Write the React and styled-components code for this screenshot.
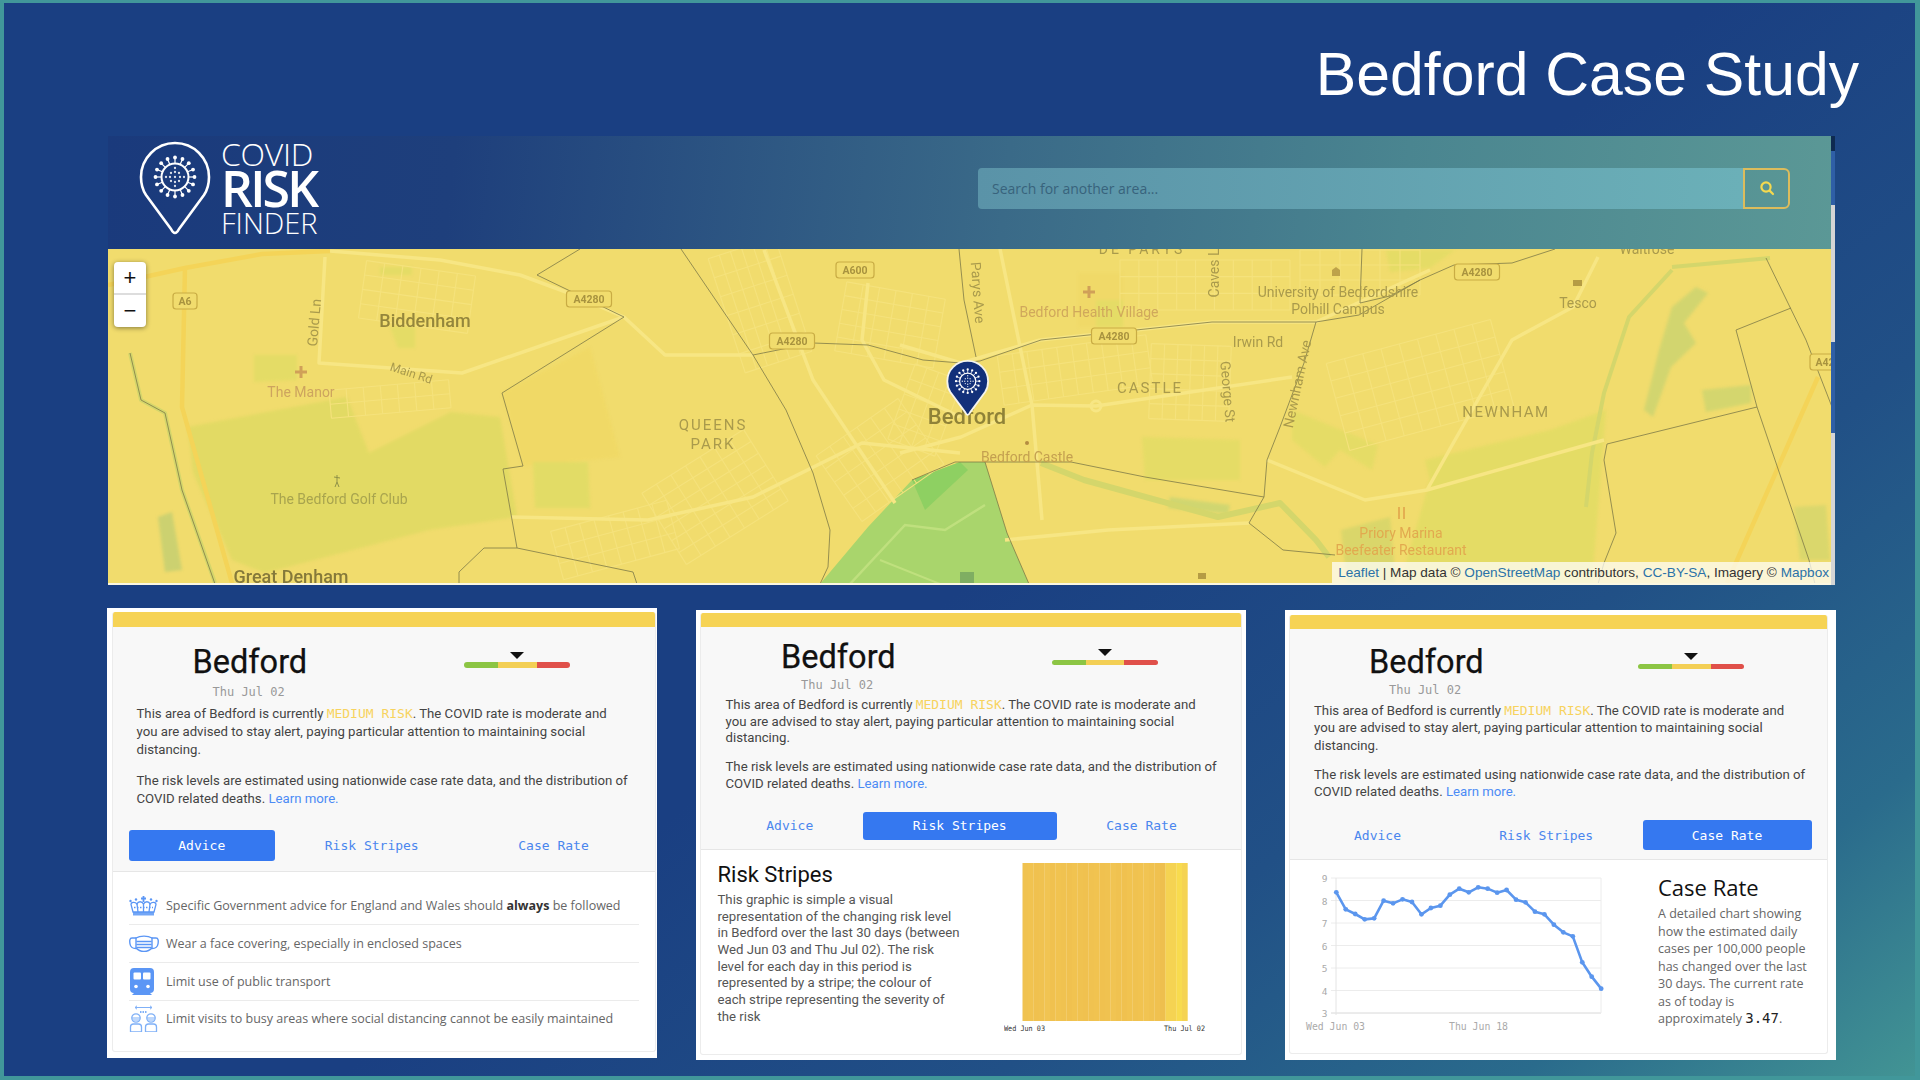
import React from "react";
import styled, { createGlobalStyle } from "styled-components";

const GlobalStyle = createGlobalStyle`
  html, body { margin: 0; padding: 0; background: #1a3f82; }
  * { box-sizing: border-box; }
`;

const Slide = styled.div`
  width: 1920px;
  height: 1080px;
  overflow: hidden;
  border-style: solid;
  border-color: #41979a;
  border-width: 3px 5px 4px 4px;
  background: linear-gradient(142deg, #1a3f82 0%, #1a3f82 52%, #215086 72%, #2a6b8c 88%, #429494 100%);
  font-family: Roboto, "Liberation Sans", sans-serif;
`;

const SlideTitle = styled.h1`
  margin: 0;
  height: 133px;
  padding: 36px 56px 0 0;
  text-align: right;
  font-family: "Liberation Sans", Arial, sans-serif;
  font-weight: 400;
  font-size: 60.7px;
  color: #fff;
`;

const MapPanel = styled.section`
  position: relative;
  width: 1725px;
  height: 449px;
  margin-left: 104px;
  display: flex;
  flex-direction: column;
`;

const EdgeSliver = styled.div`
  position: absolute;
  top: 0;
  right: -2px;
  width: 4px;
  height: 449px;
  background: linear-gradient(to bottom, #0e2a50 0 15px, #2f5fa6 15px 69px, #d5d5d5 69px 206px, #2f5fa6 206px 297px, #d5d5d5 297px);
`;

const TopBar = styled.header`
  height: 113px;
  flex: none;
  display: flex;
  align-items: center;
  padding: 0 43px 9px 30px;
  background: linear-gradient(96deg, #1a3a7c 0%, #1e3f7c 20%, #3a6a88 52%, #4a8590 75%, #5b9896 100%);
`;

const Logo = styled.div`
  display: flex;
  align-items: center;
  gap: 9px;
`;

const LogoWords = styled.div`
  display: flex;
  flex-direction: column;
  margin-top: -2px;
  font-family: "Open Sans", sans-serif;
  color: #fff;
`;

const LogoWord = styled.span`
  display: block;
  white-space: nowrap;
  font-size: ${(p) => p.$size}px;
  font-weight: ${(p) => p.$weight};
  line-height: ${(p) => p.$line}px;
  letter-spacing: ${(p) => p.$track}px;
`;

const Search = styled.div`
  margin-left: auto;
  display: flex;
  height: 41px;
`;

const SearchInput = styled.div`
  width: 765px;
  height: 41px;
  padding-left: 14px;
  display: flex;
  align-items: center;
  border-radius: 4px 0 0 4px;
  background: linear-gradient(90deg, #5a93a8, #6bb0b8);
  font-family: "Open Sans", sans-serif;
  font-size: 14px;
  color: #38637c;
`;

const SearchButton = styled.div`
  width: 47px;
  height: 41px;
  display: flex;
  align-items: center;
  justify-content: center;
  border: 2px solid #dcbc5c;
  border-radius: 0 6px 6px 0;
`;

const MapArea = styled.div`
  position: relative;
  flex: 1;
  overflow: hidden;
  background: #f1dc6d;
  border-bottom: 2px solid #fbf7e2;
`;

const MapSvg = styled.svg`
  display: block;
  filter: blur(0.45px);
`;

const SoftZones = styled.g`
  filter: blur(1.5px);
`;

const ZoomControl = styled.div`
  position: absolute;
  top: 13px;
  left: 6px;
  width: 32px;
  height: 65px;
  background: #fff;
  border-radius: 4px;
  box-shadow: 0 1px 5px rgba(0, 0, 0, 0.45);
`;

const ZoomButton = styled.div`
  height: ${(p) => p.$h}px;
  display: flex;
  align-items: center;
  justify-content: center;
  font-family: "Liberation Sans", sans-serif;
  font-size: 22px;
  color: #111;
  & + & { border-top: 2px solid #ddd; }
`;

const Attribution = styled.div`
  position: absolute;
  right: 0;
  bottom: 0;
  height: 21px;
  padding: 0 4px 0 6px;
  display: flex;
  align-items: center;
  white-space: pre;
  background: rgba(255, 255, 255, 0.72);
  font-family: "Liberation Sans", Arial, sans-serif;
  font-size: 13.6px;
  color: #333;
`;

const AttrLink = styled.span`
  color: #2b72a8;
`;

const CardRow = styled.div`
  display: flex;
  align-items: flex-start;
  gap: 39px;
  margin-left: 103px;
`;

const Frame = styled.article`
  width: ${(p) => p.$m.width}px;
  height: ${(p) => p.$m.height}px;
  margin-top: ${(p) => p.$m.top}px;
  padding: ${(p) => p.$m.frame};
  background: #fff;
`;

const Inner = styled.div`
  height: 100%;
  display: flex;
  flex-direction: column;
  background: #fff;
  border-radius: 3px;
  border: 1px solid #ececec;
  border-top: 0;
  overflow: hidden;
`;

const RiskBand = styled.div`
  height: ${(p) => p.$m.band}px;
  flex: none;
  background: #f6d355;
`;

const Summary = styled.div`
  flex: none;
  background: #f8f8f8;
  border-bottom: 1px solid #e6e6e6;
  padding-bottom: ${(p) => p.$m.tabsBottom}px;
`;

const HeadRow = styled.div`
  display: flex;
  align-items: flex-start;
`;

const TitleBlock = styled.div`
  flex: 0 0 ${(p) => p.$m.meterLeft}px;
  padding: ${(p) => p.$m.titleTop}px 0 0 ${(p) => p.$m.titleLeft}px;
`;

const PlaceName = styled.h2`
  margin: 0;
  font-family: Roboto, sans-serif;
  font-weight: 400;
  font-size: 32.5px;
  line-height: 36px;
  color: #111;
  -webkit-text-stroke: 0.25px #111;
`;

const DateText = styled.div`
  margin: ${(p) => p.$m.dateGap}px 0 0 20px;
  height: 16px;
  font-family: "DejaVu Sans Mono", monospace;
  font-size: 12px;
  line-height: 16px;
  color: #999;
`;

const Meter = styled.div`
  width: 106px;
  margin-top: ${(p) => p.$m.meterTop}px;
  display: flex;
  flex-direction: column;
  align-items: center;
`;

const MeterArrow = styled.div`
  width: 0;
  height: 0;
  border-left: 7.5px solid transparent;
  border-right: 7.5px solid transparent;
  border-top: 7px solid #111;
`;

const MeterBar = styled.div`
  width: 100%;
  height: 5.5px;
  margin-top: 3.5px;
  display: flex;
  border-radius: 3px;
  overflow: hidden;
`;

const MeterPart = styled.div`
  flex: ${(p) => p.$grow};
  background: ${(p) => p.$color};
`;

const Copy = styled.div`
  width: ${(p) => p.$m.copyLeft + 494}px;
  margin-top: ${(p) => p.$m.copyTop}px;
  padding-left: ${(p) => p.$m.copyLeft}px;
  font-size: 13.2px;
  line-height: ${(p) => p.$m.line}px;
  color: #444;
`;

const CopyPara = styled.p`
  margin: 0;
  & + & { margin-top: ${(p) => p.$m.paraGap}px; }
`;

const RiskWord = styled.span`
  font-family: "DejaVu Sans Mono", monospace;
  font-size: 13px;
  color: #f7d35e;
`;

const LearnMore = styled.span`
  color: #4c8bf5;
`;

const Tabs = styled.nav`
  display: flex;
  margin: ${(p) => p.$m.tabsTop}px 0 0 ${(p) => p.$m.tabsLeft}px;
`;

const Tab = styled.div`
  width: ${(p) => p.$w}px;
  height: ${(p) => p.$m.tabH}px;
  display: flex;
  align-items: center;
  justify-content: center;
  border-radius: 3px;
  font-family: "DejaVu Sans Mono", monospace;
  font-size: 13px;
  color: ${(p) => (p.$active ? "#fff" : "#4a86ee")};
  background: ${(p) => (p.$active ? "#3578f0" : "transparent")};
`;

const AdviceList = styled.ul`
  list-style: none;
  margin: 0;
  padding: 16px 16px 0;
`;

const AdviceRow = styled.li`
  height: 37.7px;
  display: flex;
  align-items: center;
  border-bottom: 1px solid ${(p) => (p.$last ? "transparent" : "#ebebeb")};
  font-family: "Open Sans", sans-serif;
  font-size: 12.5px;
  color: #666;
  white-space: nowrap;
`;

const AdviceIcon = styled.div`
  flex: 0 0 37.5px;
  display: flex;
  align-items: center;
`;

const Strong = styled.b`
  color: #333;
`;

const StripesBody = styled.div`
  flex: 1;
  display: flex;
  align-items: flex-start;
`;

const StripesText = styled.div`
  flex: 0 0 303px;
  padding: 11px 0 0 16.5px;
`;

const SectionTitle = styled.h3`
  margin: 0;
  font-family: Roboto, sans-serif;
  font-weight: 400;
  font-size: 22px;
  line-height: 28px;
  color: #111;
`;

const StripesCopy = styled.p`
  margin: 3px 0 0;
  width: 245px;
  font-size: 13.2px;
  line-height: 16.67px;
  color: #555;
`;

const StripesFigure = styled.svg`
  display: block;
  margin-top: 13px;
`;

const RateBody = styled.div`
  flex: 1;
  display: flex;
  align-items: flex-start;
`;

const RateFigure = styled.svg`
  display: block;
  flex: none;
  margin: 5px 0 0 9.5px;
`;

const RateText = styled.div`
  margin-left: 54px;
  padding-top: 11.5px;
  font-family: "Open Sans", sans-serif;
`;

const RateTitle = styled.h3`
  margin: 0;
  font-weight: 400;
  font-size: 22px;
  line-height: 30px;
  color: #111;
`;

const RateCopy = styled.p`
  margin: 3.5px 0 0;
  width: 160px;
  font-size: 12.5px;
  line-height: 17.4px;
  color: #666;
`;

const RateValue = styled.span`
  font-family: "DejaVu Sans Mono", monospace;
  font-size: 14px;
  color: #222;
`;

const MapLabel = styled.text`
  font-family: Roboto, sans-serif;
  font-size: ${(p) => p.$size || 14}px;
  font-weight: ${(p) => p.$weight || 400};
  fill: ${(p) => p.$color || "#a99a4c"};
  letter-spacing: ${(p) => p.$track || 0}px;
  text-anchor: middle;
`;

const ShieldText = styled.text`
  font-family: Roboto, sans-serif;
  font-size: 10.5px;
  font-weight: 700;
  fill: #a8933f;
  text-anchor: middle;
`;

const VIRUS_SPIKES = Array.from({ length: 16 }, (_, i) => (i * Math.PI * 2) / 16);
const VIRUS_DOTS = [[0, 0], [-5, 0], [5, 0], [0, -5], [0, 5], [-4, -4], [4, -4], [-4, 4], [4, 4], [-9, 0], [9, 0], [0, -9], [0, 9]];

const Virus = ({ cx, cy, scale = 1 }) => (
  <g transform={`translate(${cx} ${cy}) scale(${scale})`} fill="#fff" stroke="#fff">
    <circle r="13.5" fill="none" strokeWidth="2" />
    {VIRUS_SPIKES.map((a) => (
      <g key={a}>
        <line x1={Math.cos(a) * 13} y1={Math.sin(a) * 13} x2={Math.cos(a) * 19} y2={Math.sin(a) * 19} strokeWidth="1.2" />
        <circle cx={Math.cos(a) * 19.5} cy={Math.sin(a) * 19.5} r="1.9" stroke="none" />
      </g>
    ))}
    {VIRUS_DOTS.map(([x, y]) => (
      <circle key={`${x}${y}`} cx={x} cy={y} r="1.15" stroke="none" opacity="0.85" />
    ))}
  </g>
);

const PIN_PATH = "M37 93 Q35 93 33 89 L8 55 C4 49 3 42 3 37 A34 34 0 0 1 71 37 C71 42 70 49 66 55 L41 89 Q39 93 37 93 Z";

const LogoPin = () => (
  <svg width="74" height="96" viewBox="0 0 74 96">
    <path d={PIN_PATH} fill="none" stroke="#fff" strokeWidth="2.6" strokeLinejoin="round" />
    <Virus cx={37} cy={37} />
  </svg>
);

const SearchIcon = () => (
  <svg width="16" height="16" viewBox="0 0 16 16" fill="none" stroke="#f5d94f" strokeLinecap="round">
    <circle cx="7" cy="7" r="4.6" strokeWidth="2.2" />
    <line x1="10.6" y1="10.6" x2="14" y2="14" strokeWidth="2.2" />
  </svg>
);

const CrownIcon = () => (
  <svg width="29" height="20" viewBox="0 0 29 20" fill="none" stroke="#5b96f5" strokeWidth="1.3">
    <path d="M14.5 0v6M12 2.5h5" strokeWidth="1.8" />
    <path d="M4 16 2 8.5C2 6 6 5.5 8 8c1-3 5-3 6.5 0C16 5 20 5 21 8c2-2.5 6-2 6 .5L25 16Z" />
    <path d="M8 8l1 8M14.5 8v8M21 8l-1 8" />
    <path d="M4 16h21v3.5H4Z" fill="#5b96f5" stroke="none" opacity="0.85" />
    <circle cx="1.5" cy="5" r="1.2" fill="#5b96f5" stroke="none" />
    <circle cx="7" cy="3.5" r="1.2" fill="#5b96f5" stroke="none" />
    <circle cx="22" cy="3.5" r="1.2" fill="#5b96f5" stroke="none" />
    <circle cx="27.5" cy="5" r="1.2" fill="#5b96f5" stroke="none" />
    <path d="M5 11.5h19" strokeDasharray="1.5 1.5" />
  </svg>
);

const MaskIcon = () => (
  <svg width="30" height="18" viewBox="0 0 30 18" fill="none" stroke="#5b96f5" strokeWidth="1.4" strokeLinecap="round">
    <path d="M7 3C11 .5 19 .5 23 3V13C19 17.5 11 17.5 7 13Z" />
    <path d="M7 3H3C.5 3 .5 6 1 9c.5 3 2 4.5 6 4.5M23 3h4c2.5 0 2.5 3 2 6-.5 3-2 4.5-6 4.5" />
    <path d="M8 6.5h14M8 9.5h14M8 12.5h14" />
  </svg>
);

const TrainIcon = () => (
  <svg width="26" height="27" viewBox="0 0 26 27">
    <path d="M5 0h16a4 4 0 0 1 4 4v17a4 4 0 0 1-4 4l2 2H3l2-2a4 4 0 0 1-4-4V4a4 4 0 0 1 4-4Z" fill="#5b96f5" />
    <rect x="4.5" y="4.5" width="7.5" height="7" rx="1" fill="#fff" />
    <rect x="14" y="4.5" width="7.5" height="7" rx="1" fill="#fff" />
    <circle cx="7" cy="18.5" r="1.8" fill="#fff" />
    <circle cx="19" cy="18.5" r="1.8" fill="#fff" />
  </svg>
);

const Person = ({ x }) => (
  <g transform={`translate(${x} 0)`}>
    <circle cx="6.5" cy="13" r="4.2" />
    <path d="M2.5 13h8M3 15h7" strokeWidth="1" />
    <path d="M1 27v-5c0-2 1.5-3 3-3h5c1.5 0 3 1 3 3v5Z" />
  </g>
);

const DistanceIcon = () => (
  <svg width="29" height="27" viewBox="0 0 29 27" fill="none" stroke="#7fb0f7" strokeWidth="1.3">
    <path d="M6 2.5h17M8 .8 6 2.5l2 1.7M21 .8l2 1.7-2 1.7" strokeWidth="1" />
    <path d="M11 7h7" strokeWidth="2" strokeDasharray="1.5 1" />
    <Person x={0.5} />
    <Person x={15.5} />
  </svg>
);

const ZONES = [
  ["188,427 347,397 369,453 451,412 500,417 517,517 429,530 265,573 232,560 193,473", "#e2da64"],
  ["254,355 297,355 297,380 254,382", "#e4dc66"],
  ["380,267 412,267 412,275 380,275", "#e4dc66"],
  ["390,327 415,327 415,348 398,348", "#e4dc66"],
  ["502,393 590,347 620,457 523,466", "#f0d966"],
  ["533,462 588,462 590,508 535,508", "#e2dc66"],
  ["1078,273 1123,273 1123,327 1078,327", "#f0d968"],
  ["1096,300 1123,300 1123,327 1096,327", "#e5dc66"],
  ["1142,437 1240,440 1240,480 1145,480", "#e5dc66"],
  ["1292,410 1378,445 1372,470 1340,450 1325,467 1292,440", "#e5dc66"],
  ["1606,410 1592,583 1400,583 1430,480 1425,460 1550,430", "#e4dc65"],
  ["1696,287 1708,293 1684,323 1696,343 1671,367 1653,417 1644,410 1659,350 1672,307", "#d2d56f"],
  ["1702,390 1751,385 1751,403 1706,412", "#d4d66e"],
  ["1341,530 1390,517 1396,583 1347,583", "#dad66a"],
  ["158,517 172,512 182,570 165,572", "#ccd170"],
  ["1794,507 1826,505 1830,560 1800,560", "#dad76c"],
  ["1170,497 1230,505 1228,514 1168,508", "#d0d670"],
  ["1386,250 1455,250 1430,268 1390,272", "#e5dc66"],
];

const YELLOW_ROADS = [
  "108,285 185,268 262,254 330,251",
  "185,267 182,407 232,583",
  "1818,377 1727,583",
];

const LIGHT_ROADS = [
  "330,251 440,260 520,275 566,292 624,317 665,355 753,355",
  "900,453 961,437 1032,405 1096,406 1292,377",
  "1267,460 1365,500 1427,490 1604,440",
  "1005,540 1108,530 1249,523",
  "1427,490 1451,447 1512,340 1573,307 1598,257",
  "960,453 862,443 753,497 648,520 511,517",
  "764,250 813,380 895,503",
  "868,283 862,340 884,380 960,417",
  "325,257 319,363 462,373 621,318",
  "900,345 961,363 1040,340",
  "1040,340 1212,322 1316,322 1430,270",
  "1000,249 1032,405 1042,520",
];

const RIVERS = [
  ["1041,463 1084,480 1218,517 1280,503 1316,540 1329,557", 6],
  ["1672,270 1629,317 1604,393 1592,453 1586,507", 4],
  ["1672,267 1770,258", 4],
  ["130,353 141,400 165,413 182,490 215,583", 4],
];

const BOUNDARIES = [
  "580,249 537,275 624,317 502,393 523,466 503,469 517,548 633,572 637,584",
  "517,548 484,548 459,572 459,584",
  "681,249 753,355 786,410 813,473 830,530 828,567 820,584",
  "753,355 813,343 868,345 923,360 961,363 980,361 1041,340 1212,322 1316,322 1359,315 1420,280 1454,265 1512,263 1555,249",
  "959,249 964,300 976,357",
  "1362,249 1360,303 1390,296 1420,280",
  "1316,322 1304,363 1280,427 1267,460 1264,497 1249,523 1283,550 1335,555",
  "955,462 1071,462 1145,477 1264,497",
  "912,480 955,462",
  "985,462 1007,533 1029,584",
  "1766,258 1806,340 1832,407",
  "1791,308 1736,330 1757,407 1809,560 1815,584",
  "1757,407 1607,444 1604,460 1616,533 1604,563 1598,584",
  "130,353 141,400 165,413 182,490 215,584",
];

const GRIDS = [
  [362, 268, 110, 58, 6, 4, 8],
  [330, 385, 120, 28, 7, 2, -5],
  [655, 455, 120, 84, 7, 6, -32],
  [700, 270, 120, 70, 6, 6, 72],
  [840, 290, 100, 70, 6, 5, 10],
  [830, 420, 100, 80, 6, 5, -35],
  [1000, 345, 150, 50, 10, 3, -8],
  [1150, 345, 80, 75, 6, 5, 2],
  [1120, 260, 170, 50, 9, 3, 0],
  [1335, 340, 170, 90, 9, 5, -15],
  [1300, 250, 120, 45, 6, 3, 0],
  [555, 515, 120, 50, 8, 3, -15],
  [900, 370, 50, 80, 4, 5, 20],
];

const Grid = ({ x, y, w, h, cols, rows, rot }) => {
  const vert = Array.from({ length: cols + 1 }, (_, i) => x + (i * w) / cols);
  const horiz = Array.from({ length: rows + 1 }, (_, i) => y + (i * h) / rows);
  return (
    <g transform={`rotate(${rot} ${x + w / 2} ${y + h / 2})`} stroke="#f5e27c" strokeWidth="1.1">
      {vert.map((vx) => <line key={`v${vx}`} x1={vx} y1={y} x2={vx} y2={y + h} />)}
      {horiz.map((hy) => <line key={`h${hy}`} x1={x} y1={hy} x2={x + w} y2={hy} />)}
    </g>
  );
};

const Shield = ({ x, y, label, w }) => (
  <g>
    <rect x={x - w / 2} y={y - 8} width={w} height={16} rx="3" fill="#f1dc6d" stroke="#c9ac44" strokeWidth="1.2" />
    <ShieldText x={x} y={y + 4}>{label}</ShieldText>
  </g>
);

const MapDrawing = () => (
  <MapSvg width="1725" height="334" viewBox="108 249 1725 334">
    <rect x="108" y="249" width="1725" height="334" fill="#f1dc6d" />
    <SoftZones>
      {ZONES.map(([points, color]) => <polygon key={points} points={points} fill={color} />)}
    </SoftZones>
    <polygon points="820,584 868,527 912,480 960,462 985,462 1007,533 1029,584" fill="#a9d56c" />
    <polygon points="912,480 960,462 968,470 925,510" fill="#8ed062" />
    {RIVERS.map(([points, width]) => (
      <polyline key={points} points={points} fill="none" stroke="#d4d66b" strokeWidth={width} strokeLinejoin="round" />
    ))}
    {GRIDS.map(([x, y, w, h, cols, rows, rot]) => (
      <Grid key={`${x}-${y}`} x={x} y={y} w={w} h={h} cols={cols} rows={rows} rot={rot} />
    ))}
    {LIGHT_ROADS.map((points) => (
      <polyline key={points} points={points} fill="none" stroke="#f7e684" strokeWidth="3.5" strokeLinejoin="round" />
    ))}
    <polyline points="850,584 905,525 945,530 985,505" fill="none" stroke="#bfe07e" strokeWidth="2.5" />
    <polyline points="880,560 940,584" fill="none" stroke="#bfe07e" strokeWidth="2" />
    {YELLOW_ROADS.map((points) => (
      <polyline key={points} points={points} fill="none" stroke="#f4d458" strokeWidth="4.5" strokeLinejoin="round" />
    ))}
    <circle cx="1096" cy="406" r="5" fill="none" stroke="#f7e684" strokeWidth="3" />
    {BOUNDARIES.map((points) => (
      <polyline key={points} points={points} fill="none" stroke="#7d7a48" strokeWidth="0.8" strokeLinejoin="round" />
    ))}
    <Shield x={185} y={301} label="A6" w={24} />
    <Shield x={589} y={299} label="A4280" w={45} />
    <Shield x={855} y={270} label="A600" w={38} />
    <Shield x={792} y={341} label="A4280" w={45} />
    <Shield x={1114} y={336} label="A4280" w={45} />
    <Shield x={1477} y={272} label="A4280" w={45} />
    <Shield x={1825} y={362} label="A42" w={30} />

    <MapLabel x={425} y={327} $size={18} $weight={500} $color="#94863c">Biddenham</MapLabel>
    <MapLabel x={0} y={0} transform="translate(319 323) rotate(-85)">Gold Ln</MapLabel>
    <MapLabel x={0} y={0} $size={12} transform="translate(410 377) rotate(18)">Main Rd</MapLabel>
    <MapLabel x={301} y={397} $color="#cda45f">The Manor</MapLabel>
    <path d="M301 366v12M295 372h12" stroke="#d0a058" strokeWidth="3" />
    <MapLabel x={339} y={504} $color="#a8a44e">The Bedford Golf Club</MapLabel>
    <path d="M337 475v7l-2 5M337 482l2 5M334 477l6 1" stroke="#8f9148" strokeWidth="1" fill="none" />
    <MapLabel x={291} y={583} $size={18} $weight={500} $color="#85793a">Great Denham</MapLabel>
    <MapLabel x={713} y={430} $size={15} $track={2}>QUEENS</MapLabel>
    <MapLabel x={713} y={449} $size={15} $track={2}>PARK</MapLabel>
    <MapLabel x={0} y={0} transform="translate(973 293) rotate(86)">Parys Ave</MapLabel>
    <MapLabel x={1142} y={254} $track={3}>DE PARYS</MapLabel>
    <MapLabel x={0} y={0} transform="translate(1219 273) rotate(-90)">Caves L</MapLabel>
    <MapLabel x={1338} y={297}>University of Bedfordshire</MapLabel>
    <MapLabel x={1338} y={314}>Polhill Campus</MapLabel>
    <MapLabel x={1089} y={317} $color="#d0a85c">Bedford Health Village</MapLabel>
    <path d="M1089 286v12M1083 292h12" stroke="#d0a058" strokeWidth="3" />
    <path d="M1336 267l-4 3v6h8v-6Z" fill="#bda24a" />
    <MapLabel x={1258} y={347}>Irwin Rd</MapLabel>
    <MapLabel x={1150} y={393} $size={15} $track={2}>CASTLE</MapLabel>
    <MapLabel x={0} y={0} transform="translate(1223 392) rotate(85)">George St</MapLabel>
    <MapLabel x={0} y={0} transform="translate(1302 385) rotate(-78)">Newnham Ave</MapLabel>
    <MapLabel x={1506} y={417} $size={15} $track={1.5}>NEWNHAM</MapLabel>
    <MapLabel x={1578} y={308}>Tesco</MapLabel>
    <rect x="1573" y="280" width="9" height="6" fill="#b59c44" />
    <MapLabel x={1647} y={254}>Waitrose</MapLabel>
    <MapLabel x={967} y={424} $size={22} $weight={500} $color="#8f8238">Bedford</MapLabel>
    <MapLabel x={1027} y={462} $color="#c4a050">Bedford Castle</MapLabel>
    <circle cx="1027" cy="443" r="2" fill="#b48c40" />
    <MapLabel x={1401} y={538} $color="#e2a94f">Priory Marina</MapLabel>
    <MapLabel x={1401} y={555} $color="#e2a94f">Beefeater Restaurant</MapLabel>
    <path d="M1399 507v12M1404 507v12" stroke="#e0a048" strokeWidth="1.5" />
    <rect x="1198" y="573" width="8" height="6" fill="#b59c44" />
    <rect x="960" y="572" width="14" height="11" fill="#7fae62" />

    <g transform="translate(945.5 359) scale(0.6)">
      <path d={PIN_PATH} fill="#12307a" stroke="#f4f4ee" strokeWidth="3" strokeLinejoin="round" />
      <Virus cx={37} cy={37} />
    </g>
  </MapSvg>
);

const STRIPE_SHADES = [
  "#f0c250", "#f1c350", "#f0c14f", "#f0c250", "#f1c452", "#f0c14f", "#f1c350", "#f0c250", "#f0c14f", "#f1c350",
  "#f0c250", "#f0c14f", "#f0c250", "#f1c350", "#f0c14f", "#f0c250", "#f1c452", "#f0c250", "#f0c14f", "#f1c350",
  "#f0c250", "#f1c350", "#f1c452", "#f0c250", "#f0c14f", "#eebf4e", "#f5d352", "#f5d352", "#f8db4e", "#f5d352",
];

const StripesChart = () => (
  <StripesFigure width="202" height="178" viewBox="0 0 202 178">
    {STRIPE_SHADES.map((color, i) => (
      <rect key={i} x={18.5 + i * 5.5} y="0" width="5.7" height="158" fill={color} />
    ))}
    <text x="0" y="168" fontFamily="DejaVu Sans Mono, monospace" fontSize="7.5" fill="#333" textLength="41" lengthAdjust="spacingAndGlyphs">Wed Jun 03</text>
    <text x="160" y="168" fontFamily="DejaVu Sans Mono, monospace" fontSize="7.5" fill="#333" textLength="41" lengthAdjust="spacingAndGlyphs">Thu Jul 02</text>
  </StripesFigure>
);

const RATE_Y = [877, 928, 942, 958, 955, 902, 910, 898, 906, 943, 924, 917, 884, 866, 877, 862, 866, 878, 870, 899, 907, 935, 943, 974, 997, 1009, 1087, 1130, 1166];
const RATE_POINTS = RATE_Y.map((v, i) => [1337.3 + i * 9.46, 600 + v / 3]);
const RATE_TICKS = [9, 8, 7, 6, 5, 4, 3];

const RateChart = () => (
  <RateFigure width="305" height="170" viewBox="1300 865 305 170">
    {RATE_TICKS.map((tick, i) => (
      <g key={tick}>
        <line x1="1332" y1={878 + i * 22.5} x2="1602" y2={878 + i * 22.5} stroke={tick === 3 ? "#d8d8d8" : "#ececec"} />
        <text x="1325.5" y={882 + i * 22.5} fontFamily="DejaVu Sans Mono, monospace" fontSize="9.5" fill="#aaa" textAnchor="middle">{tick}</text>
      </g>
    ))}
    <line x1="1337" y1="878" x2="1337" y2="1015" stroke="#e4e4e4" />
    <line x1="1602" y1="878" x2="1602" y2="1013" stroke="#ececec" />
    <text x="1307" y="1030" fontFamily="DejaVu Sans Mono, monospace" fontSize="9.8" fill="#aaa">Wed Jun 03</text>
    <text x="1450" y="1030" fontFamily="DejaVu Sans Mono, monospace" fontSize="9.8" fill="#aaa">Thu Jun 18</text>
    <polyline points={RATE_POINTS.map((p) => p.join(",")).join(" ")} fill="none" stroke="#5b96ee" strokeWidth="2.6" strokeLinejoin="round" />
    {RATE_POINTS.map(([x, y]) => <circle key={x} cx={x} cy={y} r="2.4" fill="#5b96ee" />)}
  </RateFigure>
);

const METRICS = {
  advice: {
    width: 550, height: 450, top: 23, frame: "3.5px 1px 6px 4.5px", band: 15,
    titleTop: 17, titleLeft: 80, dateGap: 4, meterLeft: 351.5, meterTop: 25,
    copyTop: 5, copyLeft: 24, line: 18.4, paraGap: 12.6,
    tabsTop: 21, tabsLeft: 16, tabH: 31, tabsBottom: 10, tabWidths: [146.5, 193.5, 170],
  },
  stripes: {
    width: 550, height: 450, top: 25, frame: "3px 4px 5px 4px", band: 14,
    titleTop: 12, titleLeft: 80, dateGap: 2, meterLeft: 350.5, meterTop: 22,
    copyTop: 4, copyLeft: 24.5, line: 16.7, paraGap: 9.4,
    tabsTop: 19, tabsLeft: 15.5, tabH: 28.5, tabsBottom: 9, tabWidths: [146.5, 193.5, 170],
  },
  rate: {
    width: 551, height: 450, top: 25, frame: "4.5px 8.5px 6px 3.5px", band: 14.5,
    titleTop: 14.5, titleLeft: 79.5, dateGap: 2.5, meterLeft: 348.5, meterTop: 24,
    copyTop: 4, copyLeft: 24.5, line: 17.3, paraGap: 12,
    tabsTop: 20, tabsLeft: 15.5, tabH: 29.5, tabsBottom: 9.5, tabWidths: [145, 192.5, 169],
  },
};

const TAB_ITEMS = [
  ["advice", "Advice"],
  ["stripes", "Risk Stripes"],
  ["rate", "Case Rate"],
];

const RiskCard = ({ active, children }) => {
  const m = METRICS[active];
  return (
    <Frame $m={m}>
      <Inner>
        <RiskBand $m={m} />
        <Summary $m={m}>
          <HeadRow>
            <TitleBlock $m={m}>
              <PlaceName>Bedford</PlaceName>
              <DateText $m={m}>Thu Jul 02</DateText>
            </TitleBlock>
            <Meter $m={m}>
              <MeterArrow />
              <MeterBar>
                <MeterPart $grow={34} $color="#8cc544" />
                <MeterPart $grow={38.5} $color="#f3cf55" />
                <MeterPart $grow={33.5} $color="#e0504a" />
              </MeterBar>
            </Meter>
          </HeadRow>
          <Copy $m={m}>
            <CopyPara $m={m}>
              This area of Bedford is currently <RiskWord>MEDIUM RISK</RiskWord>. The COVID rate is moderate and you are advised to stay alert, paying particular attention to maintaining social distancing.
            </CopyPara>
            <CopyPara $m={m}>
              The risk levels are estimated using nationwide case rate data, and the distribution of COVID related deaths. <LearnMore>Learn more.</LearnMore>
            </CopyPara>
          </Copy>
          <Tabs $m={m}>
            {TAB_ITEMS.map(([key, label], i) => (
              <Tab key={key} $m={m} $w={m.tabWidths[i]} $active={key === active}>{label}</Tab>
            ))}
          </Tabs>
        </Summary>
        {children}
      </Inner>
    </Frame>
  );
};

const App = () => (
  <>
    <GlobalStyle />
    <Slide>
      <SlideTitle>Bedford Case Study</SlideTitle>
      <MapPanel>
        <TopBar>
          <Logo>
            <LogoPin />
            <LogoWords>
              <LogoWord $size={32} $weight={300} $line={27} $track={-0.3}>COVID</LogoWord>
              <LogoWord $size={50} $weight={600} $line={43} $track={-2.8}>RISK</LogoWord>
              <LogoWord $size={29} $weight={300} $line={25} $track={0}>FINDER</LogoWord>
            </LogoWords>
          </Logo>
          <Search>
            <SearchInput>Search for another area...</SearchInput>
            <SearchButton><SearchIcon /></SearchButton>
          </Search>
        </TopBar>
        <MapArea>
          <MapDrawing />
          <ZoomControl>
            <ZoomButton $h={31}>+</ZoomButton>
            <ZoomButton $h={34}>−</ZoomButton>
          </ZoomControl>
          <Attribution>
            <AttrLink>Leaflet</AttrLink> | Map data © <AttrLink>OpenStreetMap</AttrLink> contributors, <AttrLink>CC-BY-SA</AttrLink>, Imagery © <AttrLink>Mapbox</AttrLink>
          </Attribution>
        </MapArea>
        <EdgeSliver />
      </MapPanel>
      <CardRow>
        <RiskCard active="advice">
          <AdviceList>
            <AdviceRow>
              <AdviceIcon><CrownIcon /></AdviceIcon>
              <span>Specific Government advice for England and Wales should <Strong>always</Strong> be followed</span>
            </AdviceRow>
            <AdviceRow>
              <AdviceIcon><MaskIcon /></AdviceIcon>
              <span>Wear a face covering, especially in enclosed spaces</span>
            </AdviceRow>
            <AdviceRow>
              <AdviceIcon><TrainIcon /></AdviceIcon>
              <span>Limit use of public transport</span>
            </AdviceRow>
            <AdviceRow $last>
              <AdviceIcon><DistanceIcon /></AdviceIcon>
              <span>Limit visits to busy areas where social distancing cannot be easily maintained</span>
            </AdviceRow>
          </AdviceList>
        </RiskCard>
        <RiskCard active="stripes">
          <StripesBody>
            <StripesText>
              <SectionTitle>Risk Stripes</SectionTitle>
              <StripesCopy>
                This graphic is simple a visual representation of the changing risk level in Bedford over the last 30 days (between Wed Jun 03 and Thu Jul 02). The risk level for each day in this period is represented by a stripe; the colour of each stripe representing the severity of the risk
              </StripesCopy>
            </StripesText>
            <StripesChart />
          </StripesBody>
        </RiskCard>
        <RiskCard active="rate">
          <RateBody>
            <RateChart />
            <RateText>
              <RateTitle>Case Rate</RateTitle>
              <RateCopy>
                A detailed chart showing how the estimated daily cases per 100,000 people has changed over the last 30 days. The current rate as of today is approximately <RateValue>3.47</RateValue>.
              </RateCopy>
            </RateText>
          </RateBody>
        </RiskCard>
      </CardRow>
    </Slide>
  </>
);

export default App;
